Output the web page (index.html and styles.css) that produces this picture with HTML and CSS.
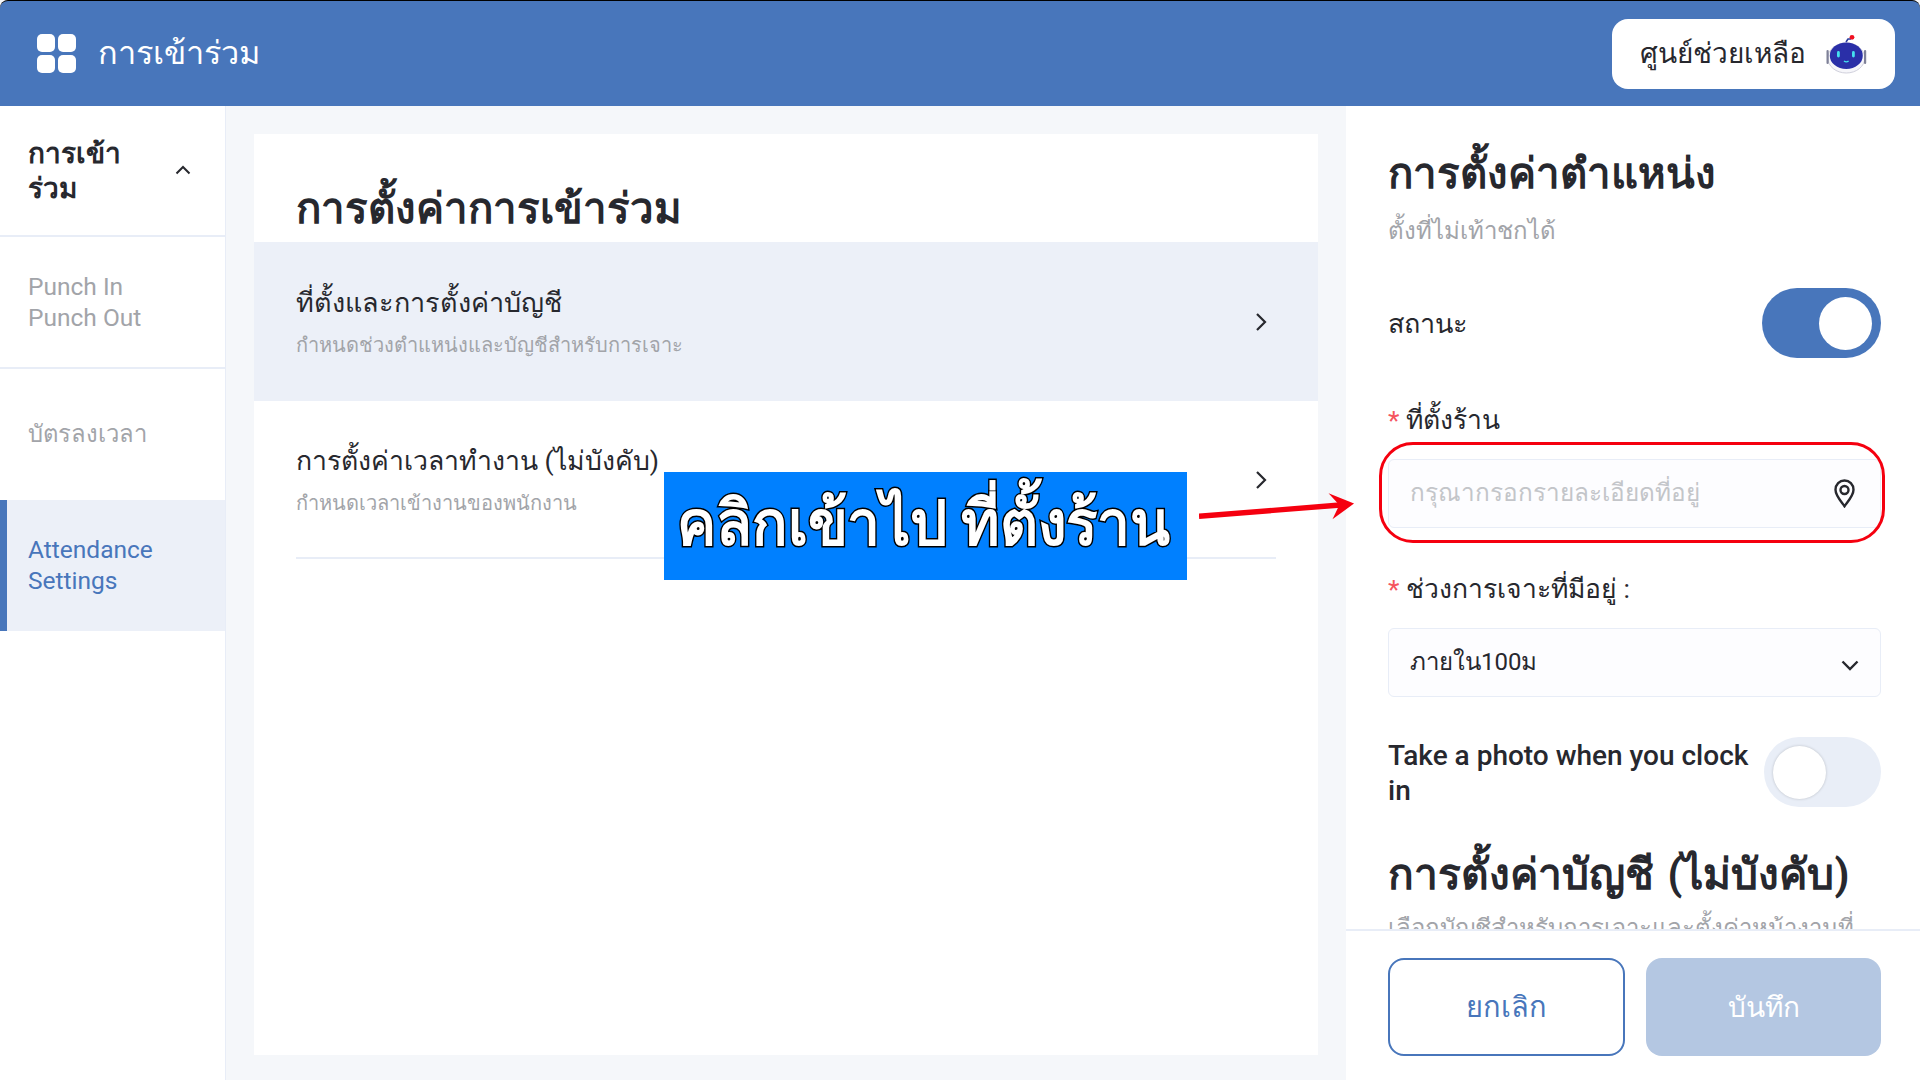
FILE: index.html
```html
<!DOCTYPE html>
<html lang="th">
<head>
<meta charset="utf-8">
<title>การเข้าร่วม</title>
<link rel="stylesheet" href="styles.css">
</head>
<body>
<div class="app">
  <header class="topbar">
    <div class="brand">
      <svg class="grid-icon" viewBox="0 0 39 39"><rect x="0" y="0" width="18" height="18" rx="5"/><rect x="21" y="0" width="18" height="18" rx="5"/><rect x="0" y="21" width="18" height="18" rx="5"/><rect x="21" y="21" width="18" height="18" rx="5"/></svg>
      <span class="brand-title">การเข้าร่วม</span>
    </div>
    <button class="help">
      <span class="help-text">ศูนย์ช่วยเหลือ</span>
      <svg class="bot" viewBox="0 0 42 42"><path d="M21 9l2-3h3" stroke="#2b3a9b" stroke-width="1.600" fill="none"/><circle cx="27" cy="4.300" r="2.400" fill="#f01020"/><ellipse cx="21.300" cy="25" rx="18.500" ry="15" fill="#f6f6fa" stroke="#d0d0dc"/><rect x="1.500" y="17" width="2.200" height="14" rx="1.100" fill="#7f8198"/><rect x="39" y="17" width="2.200" height="14" rx="1.100" fill="#7f8198"/><ellipse cx="21.300" cy="22.700" rx="16.500" ry="13.300" fill="#2a2fa8"/><rect x="12" y="18" width="2.800" height="6.500" rx="1.400" fill="#45e0ef"/><rect x="27" y="18" width="2.800" height="6.500" rx="1.400" fill="#45e0ef"/><path d="M19 28q2.300 1.800 4.600 0" stroke="#45e0ef" stroke-width="1.400" fill="none"/></svg>
    </button>
  </header>
  <div class="body">
    <aside class="sidebar">
      <div class="side-head"><span>การเข้าร่วม</span><svg class="chev-up" viewBox="0 0 16 10"><path d="M1.500 8.500L8 2l6.500 6.500" fill="none" stroke="#27282e" stroke-width="2"/></svg></div>
      <div class="side-item two">Punch In Punch Out</div>
      <div class="side-item card">บัตรลงเวลา</div>
      <div class="side-item active">Attendance Settings</div>
    </aside>
    <main class="main">
      <section class="panel">
        <h1>การตั้งค่าการเข้าร่วม</h1>
        <div class="row selected">
          <div><div class="row-title">ที่ตั้งและการตั้งค่าบัญชี</div><div class="row-sub">กำหนดช่วงตำแหน่งและบัญชีสำหรับการเจาะ</div></div>
          <svg class="chev-right" viewBox="0 0 12 20"><path d="M2 2l8 8-8 8" fill="none" stroke="#27282e" stroke-width="2.200"/></svg>
        </div>
        <div class="row plain">
          <div><div class="row-title">การตั้งค่าเวลาทำงาน (ไม่บังคับ)</div><div class="row-sub">กำหนดเวลาเข้างานของพนักงาน</div></div>
          <svg class="chev-right" viewBox="0 0 12 20"><path d="M2 2l8 8-8 8" fill="none" stroke="#27282e" stroke-width="2.200"/></svg>
        </div>
      </section>
    </main>
    <aside class="drawer">
      <div class="drawer-scroll">
        <h2>การตั้งค่าตำแหน่ง</h2>
        <p class="hint">ตั้งที่ไม่เท้าชกได้</p>
        <div class="switch-row status"><span>สถานะ</span><span class="switch on"><i></i></span></div>
        <label class="label"><b>*</b> ที่ตั้งร้าน</label>
        <div class="field addr"><span class="ph">กรุณากรอกรายละเอียดที่อยู่</span>
          <svg class="pin" viewBox="0 0 21 29"><path d="M10.500 1.500C5.500 1.500 1.500 5.500 1.500 10.800c0 6 5.800 11.800 9 16.400 3.200-4.600 9-10.400 9-16.400 0-5.300-4-9.300-9-9.300z" fill="none" stroke="#27282e" stroke-width="2.400"/><circle cx="10.500" cy="11" r="4" fill="none" stroke="#27282e" stroke-width="2.400"/></svg>
        </div>
        <label class="label second"><b>*</b> ช่วงการเจาะที่มีอยู่ :</label>
        <div class="field select"><span class="sel-value">ภายใน100ม</span>
          <svg class="chev-down" viewBox="0 0 18 11"><path d="M1.500 1.500L9 9l7.500-7.500" fill="none" stroke="#27282e" stroke-width="2.400"/></svg>
        </div>
        <div class="switch-row photo"><span class="photo-label">Take a photo when you clock in</span><span class="switch off"><i></i></span></div>
        <h2 class="acct">การตั้งค่าบัญชี (ไม่บังคับ)</h2>
        <p class="hint clip">เลือกบัญชีสำหรับการเจาะและตั้งค่าหน้างานที่</p>
      </div>
      <div class="drawer-foot">
        <button class="btn cancel">ยกเลิก</button>
        <button class="btn save">บันทึก</button>
      </div>
    </aside>
  </div>
  <div class="callout"><span>คลิกเข้าไป ที่ตั้งร้าน</span></div>
  <svg class="arrow" viewBox="0 0 160 30"><path d="M0 24.500L144 13" stroke="#f5000f" stroke-width="5.500" fill="none"/><path d="M132 1l26 10.500-22 16 7-14.500z" fill="#f5000f"/></svg>
  <div class="ring"></div>
</div>
</body>
</html>
```
FILE: styles.css
```css
* { box-sizing: border-box; }
html, body { margin: 0; height: 100%; }
body { background: #000; font-family: Roboto, "Noto Sans", sans-serif; color: #27282e; overflow: hidden; }
.app { position: relative; width: 1920px; height: 1080px; display: flex; flex-direction: column; background: #f5f7fa; }
.topbar { height: 106px; flex: none; background: #4876bb; display: flex; align-items: center; justify-content: space-between; padding: 0 25px 0 37px; border-top: 1px solid #000; border-radius: 8px 8px 0 0; }
.brand { display: flex; align-items: center; gap: 22px; color: #fff; }
.grid-icon { width: 39px; height: 39px; fill: #fff; }
.brand-title { font-size: 32.500px; padding-bottom: 2px; }
.help { width: 283px; height: 70px; border: 0; border-radius: 16px; background: #fff; display: flex; align-items: center; justify-content: space-between; padding: 0 28px; font: 28px Roboto, "Noto Sans", sans-serif; color: #27282e; }
.help-text { padding-bottom: 2px; margin-right: 1px; }
.bot { width: 42px; height: 42px; }
.body { flex: 1; display: flex; min-height: 0; }
.sidebar { width: 226px; flex: none; background: #fff; border-right: 1px solid #e8edf7; }
.side-head { height: 131px; display: flex; align-items: center; justify-content: space-between; padding: 0 34px 0 28px; border-bottom: 2px solid #e8edf7; font-size: 28px; font-weight: 700; line-height: 35px; }
.side-head span { width: 110px; }
.chev-up { width: 16px; height: 10px; margin-bottom: 2px; }
.side-item { display: flex; align-items: center; padding: 0 28px; font-size: 24.500px; line-height: 31px; color: #a2a4a9; }
.side-item.two { height: 132px; border-bottom: 2px solid #e8edf7; padding-right: 45px; }
.side-item.card { height: 131px; font-size: 23.800px; }
.side-item.active { height: 131px; background: #ecf0f8; color: #4876bb; border-left: 7px solid #4876bb; padding: 0 28px 2px 21px; }
.main { flex: 1; padding: 28px 28px 25px 28px; min-width: 0; }
.panel { height: 100%; background: #fff; }
h1 { margin: 0; height: 108px; padding: 47px 42px 0; font-size: 42px; line-height: 56px; font-weight: 700; }
.row { height: 159px; display: flex; align-items: center; justify-content: space-between; padding: 0 51px 0 42px; }
.row.selected { background: #ecf0f8; }
.row.plain { height: 158px; margin: 0 42px; padding: 2px 9px 0 0; border-bottom: 2px solid #e8edf7; }
.row-title { font-size: 27px; line-height: 40px; }
.row.plain .row-title { font-size: 26.600px; }
.row-sub { font-size: 20px; line-height: 32px; color: #a2a4a9; margin-top: 6px; }
.chev-right { width: 12px; height: 20px; }
.drawer { width: 574px; flex: none; background: #fff; display: flex; flex-direction: column; }
.drawer-scroll { flex: 1; min-height: 0; overflow: hidden; padding: 0 39px 0 42px; border-bottom: 2px solid #e8edf7; }
h2 { margin: 0; font-size: 42px; line-height: 56px; font-weight: 700; padding-top: 40px; }
.hint { margin: 12px 0 0; font-size: 24px; line-height: 34px; color: #a2a4a9; }
.switch-row { display: flex; align-items: center; justify-content: space-between; font-size: 27px; }
.status { margin-top: 40px; height: 70px; }
.photo { margin-top: 40px; height: 70px; font-weight: 500; font-size: 28px; line-height: 35px; }
.photo-label { width: 372px; padding-top: 1px; }
.switch { position: relative; width: 119px; height: 70px; border-radius: 35px; display: block; flex: none; }
.switch i { position: absolute; top: 9px; width: 53px; height: 53px; border-radius: 50%; background: #fff; }
.switch.on { background: #4876bb; }
.switch.on i { right: 9px; }
.switch.off { width: 117px; background: #e9eef7; }
.switch.off i { left: 9px; box-shadow: 0 0 3px rgba(0,0,0,.2); }
.label { display: block; font-size: 26.500px; line-height: 40px; margin-top: 42px; }
.label b { color: #f5555f; font-weight: 400; }
.label.second { margin-top: 41px; }
.field { height: 69px; margin-top: 19px; background: #fdfdff; border: 1px solid #e8edf7; border-radius: 6px; display: flex; align-items: center; justify-content: space-between; padding: 0 25px 0 21px; font-size: 24px; }
.ph { font-size: 24.300px; color: #c3c5c9; padding-bottom: 2px; }
.sel-value { padding-bottom: 2px; }
.pin { width: 21px; height: 29px; }
.chev-down { width: 18px; height: 11px; margin-top: 5px; margin-right: -4px; }
.acct { font-size: 42.500px; word-spacing: 3px; padding-top: 40px; }
.clip { margin-top: 8px; white-space: nowrap; }
.drawer-foot { height: 149px; flex: none; padding: 27px 39px 0 42px; display: flex; justify-content: space-between; }
.btn { height: 98px; border-radius: 16px; font: 28px Roboto, "Noto Sans", sans-serif; }
.cancel { width: 237px; background: #fff; border: 2px solid #4876bb; color: #4876bb; font-size: 29px; }
.save { width: 235px; background: #b4c7e2; border: 0; color: #fff; }
.callout { position: absolute; left: 664px; top: 472px; width: 523px; height: 108px; padding: 0 4px 6px 0; background: #0080ff; color: #fff; font-size: 62px; font-weight: 700; display: flex; align-items: center; justify-content: center; white-space: nowrap; }
.callout span { display: inline-block; transform: scaleX(.945); -webkit-text-stroke: 3px #000; paint-order: stroke fill; }
.arrow { position: absolute; left: 1199px; top: 492px; width: 157px; height: 30px; }
.ring { position: absolute; left: 1379px; top: 442px; width: 506px; height: 101px; border: 3px solid #f5000f; border-radius: 34px; }
```
